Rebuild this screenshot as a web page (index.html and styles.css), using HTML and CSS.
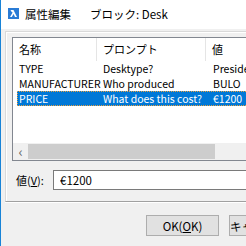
FILE: index.html
```html
<!DOCTYPE html>
<html lang="ja">
<head>
    <meta charset="UTF-8">
    <title>属性編集</title>
    <link rel="stylesheet" href="styles.css">
</head>
<body>
    <div class="window">
        <!-- Title bar -->
        <header class="titlebar">
            <svg class="app-icon" width="11" height="11" viewBox="0 0 11 11">
                <rect width="11" height="11" fill="#2a7bd5"/>
                <path d="M2.5 2 H5.5 L9 9 H7 L5.6 6 L3.8 9 H2 L4.6 4.6 L3.3 3.4 Z" fill="#fff"/>
            </svg>
            <span class="title">属性編集</span>
            <span class="block-name">ブロック: Desk</span>
        </header>

        <main class="dialog">
            <!-- Attribute list -->
            <section class="panel">
                <div class="listview">
                    <div class="list-header">
                        <div class="col col-name">名称</div>
                        <div class="col col-prompt">プロンプト</div>
                        <div class="col col-value">値</div>
                    </div>
                    <div class="list-body">
                        <div class="row">
                            <div class="cell cell-name">TYPE</div>
                            <div class="cell cell-prompt">Desktype?</div>
                            <div class="cell cell-value">President</div>
                        </div>
                        <div class="row">
                            <div class="cell cell-name">MANUFACTURER</div>
                            <div class="cell cell-prompt">Who produced</div>
                            <div class="cell cell-value">BULO</div>
                        </div>
                        <div class="row selected">
                            <div class="cell cell-name">PRICE</div>
                            <div class="cell cell-prompt">What does this cost?</div>
                            <div class="cell cell-value">€1200</div>
                        </div>
                    </div>
                    <div class="hscroll">
                        <div class="arrow">&lsaquo;</div>
                        <div class="thumb"></div>
                    </div>
                </div>

                <div class="value-row">
                    <label for="value">値(<u>V</u>):</label>
                    <input type="text" id="value" value="€1200">
                </div>
            </section>

            <!-- Buttons -->
            <div class="buttons">
                <button>OK(<u>O</u>K)</button>
                <button>キャンセル(<u>C</u>)</button>
            </div>
        </main>
    </div>
</body>
</html>
```

FILE: styles.css
```css
body {
    margin: 0;
    padding: 0;
    width: 246px;
    height: 246px;
    overflow: hidden;
    font-family: "Noto Sans CJK JP", sans-serif;
    font-size: 11px;
    color: #000;
}
.window {
    width: 320px;
    height: 246px;
    border-left: 1px solid #1883d7;
    background-color: #f0f0f0;
}
.titlebar {
    display: flex;
    align-items: center;
    height: 29px;
    background-color: white;
    padding-left: 7px;
    font-size: 11.5px;
}
.app-icon {
    margin-right: 6px;
    margin-top: -2px;
}
.title {
    margin-right: 19px;
    margin-top: -2px;
}
.block-name {
    margin-top: -2px;
}
.dialog {
    padding: 2px 0 0 4px;
}
.panel {
    border-top: 1px solid #d9d9d9;
    border-left: 1px solid #d9d9d9;
    border-bottom: 1px solid #a0a0a0;
    box-shadow: inset 1px 1px 0 white, 0 1px 0 white;
    padding: 5px 0 11px 6px;
}
.listview {
    border: 1px solid #828790;
    background-color: white;
    height: 122px;
    display: flex;
    flex-direction: column;
}
.list-header {
    display: flex;
    height: 23px;
    line-height: 22px;
}
.col {
    padding-left: 6px;
    border-right: 1px solid #e5e5e5;
    box-sizing: border-box;
}
.col-name {
    width: 84px;
}
.col-prompt {
    width: 109px;
}
.col-value {
    flex: 1;
    border-right: none;
}
.list-body {
    flex: 1;
    padding-left: 4px;
    font-size: 10.5px;
}
.row {
    display: flex;
    height: 15px;
    line-height: 15px;
    white-space: nowrap;
}
.row.selected {
    background-color: #0078d7;
    color: white;
    outline: 1px dotted #e8a040;
    outline-offset: -1px;
}
.cell {
    box-sizing: border-box;
}
.cell-name {
    width: 80px;
    padding-left: 2px;
}
.cell-prompt {
    width: 109px;
    padding-left: 6px;
}
.cell-value {
    padding-left: 7px;
}
.hscroll {
    display: flex;
    align-items: center;
    height: 17px;
    background-color: #f0f0f0;
}
.arrow {
    width: 15px;
    text-align: center;
    font-size: 14px;
    line-height: 17px;
    color: #606060;
}
.thumb {
    width: 187px;
    height: 15px;
    background-color: #cdcdcd;
}
.value-row {
    display: flex;
    align-items: center;
    margin-top: 9px;
}
.value-row label {
    width: 37px;
    padding-left: 4px;
}
.value-row input {
    flex: 1;
    height: 20px;
    box-sizing: border-box;
    border: 1px solid #7a7a7a;
    font-family: inherit;
    font-size: 11.5px;
    padding: 0 0 0 6px;
    margin: 0;
}
.buttons {
    display: flex;
    gap: 10px;
    padding: 13px 0 0 141px;
}
.buttons button {
    width: 73px;
    height: 21px;
    background-color: #e1e1e1;
    border: 1px solid #adadad;
    font-family: inherit;
    font-size: 11.5px;
    padding: 0;
    white-space: nowrap;
    overflow: hidden;
}
```
